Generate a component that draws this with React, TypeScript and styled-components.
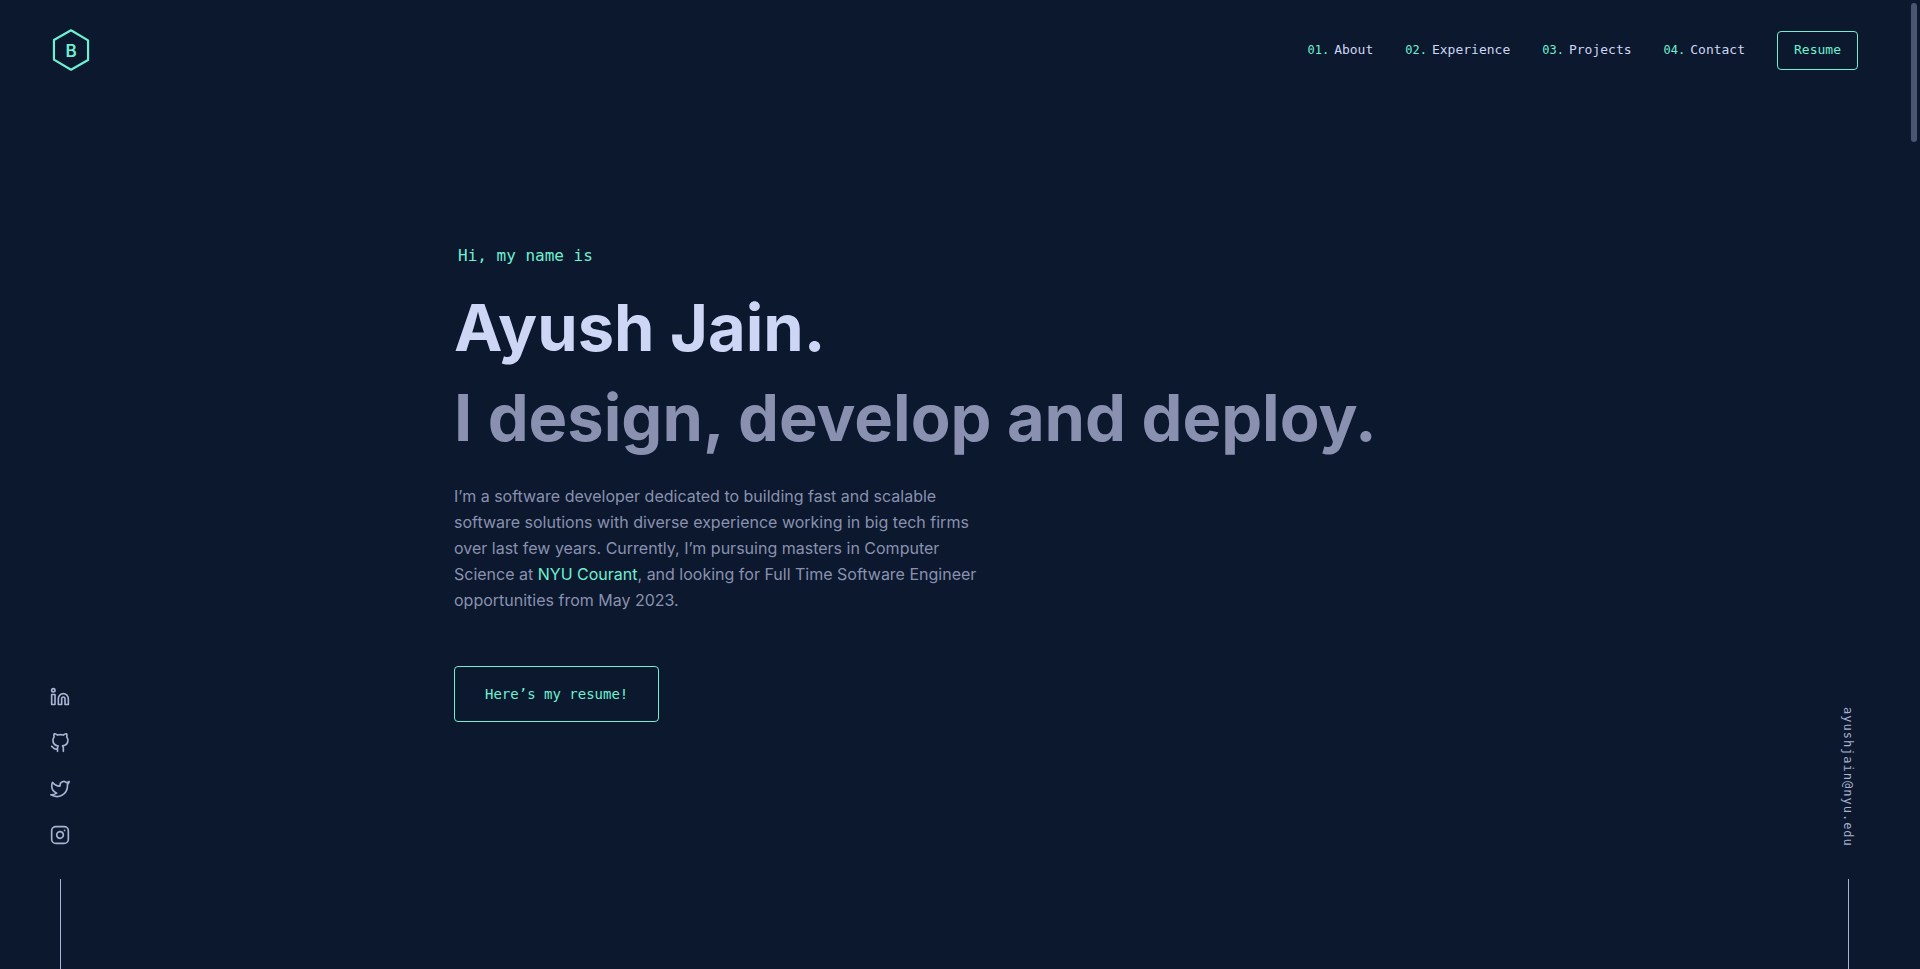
import React from "react";
import styled, { createGlobalStyle } from "styled-components";

const navy = "#0b182d";
const green = "#6ff0d2";
const slate = "#8a91b0";
const lightSlate = "#a8b2d1";
const lightest = "#ced6f6";
const sans = `Inter, "Liberation Sans", sans-serif`;
const mono = `"DejaVu Sans Mono", "Liberation Mono", monospace`;

const GlobalStyle = createGlobalStyle`
  *, *::before, *::after { box-sizing: border-box; }
  html { scrollbar-width: none; }
  body {
    margin: 0;
    background: ${navy};
    color: ${slate};
    font-family: ${sans};
    font-size: 16px;
    line-height: 26px;
  }
  a { color: inherit; text-decoration: none; }
`;

const Page = styled.div`
  display: flex;
  flex-direction: column;
  min-height: 100vh;
  padding-right: 12px;
`;

const Header = styled.header`
  display: flex;
  align-items: center;
  justify-content: space-between;
  height: 100px;
  padding: 0 50px;
`;

const LogoLink = styled.a`
  display: block;
  width: 42px;
  height: 42px;

  svg { display: block; }
  text {
    font-family: ${sans};
    font-size: 39px;
    font-weight: 600;
    text-anchor: middle;
  }
`;

const Nav = styled.nav`
  display: flex;
  align-items: center;
  gap: 32px;
  font-family: ${mono};
  font-size: 13px;
`;

const NavList = styled.ol`
  display: flex;
  gap: 32px;
  margin: 0;
  padding: 0;
  list-style: none;
`;

const NavLink = styled.a`
  display: flex;
  align-items: center;
  gap: 5px;
  color: ${lightest};
`;

const NavNumber = styled.span`
  color: ${green};
  font-size: 12px;
`;

const OutlineLink = styled.a<{ $large?: boolean }>`
  display: inline-flex;
  align-items: center;
  justify-content: center;
  height: ${(p) => (p.$large ? 56 : 39)}px;
  padding: 0 ${(p) => (p.$large ? 30 : 16)}px;
  border: 1px solid ${green};
  border-radius: 4px;
  color: ${green};
  font-family: ${mono};
  font-size: ${(p) => (p.$large ? 14 : 13)}px;
`;

const Body = styled.div`
  display: flex;
  flex: 1;
  justify-content: space-between;
  padding: 0 40px;
`;

const Side = styled.aside`
  display: flex;
  flex-direction: column;
  align-items: center;
  justify-content: flex-end;
  width: 40px;

  &::after {
    content: "";
    width: 1px;
    height: 90px;
    background: ${lightSlate};
  }
`;

const SocialList = styled.ul`
  display: flex;
  flex-direction: column;
  gap: 26px;
  margin: 0 0 34px;
  padding: 0;
  list-style: none;
`;

const SocialLink = styled.a`
  display: block;
  color: ${lightSlate};

  svg { display: block; }
`;

const EmailLink = styled.a`
  margin-bottom: 32px;
  color: ${lightSlate};
  font-family: ${mono};
  font-size: 12px;
  line-height: 18px;
  letter-spacing: 1px;
  writing-mode: vertical-rl;
`;

const Hero = styled.main`
  display: flex;
  flex: 0 1 1000px;
  flex-direction: column;
  align-items: flex-start;
  padding: 143px 0 60px;
`;

const Greeting = styled.p`
  margin: 0 0 14px 4px;
  color: ${green};
  font-family: ${mono};
  font-size: 16px;
`;

const Name = styled.h1`
  margin: 0;
  color: ${lightest};
  font-size: 65px;
  font-weight: 700;
  line-height: 90px;
`;

const Tagline = styled.h2`
  margin: 0;
  font-size: 65px;
  font-weight: 700;
  line-height: 90px;
`;

const Intro = styled.p`
  max-width: 540px;
  margin: 20px 0 53px;
`;

const GreenLink = styled.a`
  && { color: ${green}; }
`;

const ScrollThumb = styled.div`
  position: fixed;
  top: 3px;
  right: 3px;
  width: 6px;
  height: 139px;
  border-radius: 3px;
  background: #4a5572;
`;

const sections = ["About", "Experience", "Projects", "Contact"];

const socials = [
  {
    name: "LinkedIn",
    icon: (
      <>
        <path d="M16 8a6 6 0 0 1 6 6v7h-4v-7a2 2 0 0 0-2-2 2 2 0 0 0-2 2v7h-4v-7a6 6 0 0 1 6-6z" />
        <rect x="2" y="9" width="4" height="12" />
        <circle cx="4" cy="4" r="2" />
      </>
    ),
  },
  {
    name: "GitHub",
    icon: (
      <path d="M9 19c-5 1.5-5-2.5-7-3m14 6v-3.87a3.37 3.37 0 0 0-.94-2.61c3.14-.35 6.44-1.54 6.44-7A5.44 5.44 0 0 0 20 4.77 5.07 5.07 0 0 0 19.91 1S18.73.65 16 2.48a13.38 13.38 0 0 0-7 0C6.27.65 5.09 1 5.09 1A5.07 5.07 0 0 0 5 4.77a5.44 5.44 0 0 0-1.5 3.78c0 5.42 3.3 6.61 6.44 7A3.37 3.37 0 0 0 9 18.13V22" />
    ),
  },
  {
    name: "Twitter",
    icon: (
      <path d="M23 3a10.9 10.9 0 0 1-3.14 1.53 4.48 4.48 0 0 0-7.86 3v1A10.66 10.66 0 0 1 3 4s-4 9 5 13a11.64 11.64 0 0 1-7 2c9 5 20 0 20-11.5a4.5 4.5 0 0 0-.08-.83A7.72 7.72 0 0 0 23 3z" />
    ),
  },
  {
    name: "Instagram",
    icon: (
      <>
        <rect x="2" y="2" width="20" height="20" rx="5" ry="5" />
        <path d="M16 11.37A4 4 0 1 1 12.63 8 4 4 0 0 1 16 11.37z" />
        <line x1="17.5" y1="6.5" x2="17.51" y2="6.5" />
      </>
    ),
  },
];

export default function App() {
  return (
    <Page>
      <GlobalStyle />
      <Header>
        <LogoLink href="#home" aria-label="Home">
          <svg width="42" height="42" viewBox="2 2 96 96" fill="none">
            <path
              d="M50 5 11 27v45l39 23 39-22V28z"
              stroke={green}
              strokeWidth="5"
              strokeLinecap="round"
              strokeLinejoin="round"
            />
            <text x="50" y="66" fill={green}>B</text>
          </svg>
        </LogoLink>
        <Nav>
          <NavList>
            {sections.map((label, i) => (
              <li key={label}>
                <NavLink href={`#${label.toLowerCase()}`}>
                  <NavNumber>{`0${i + 1}.`}</NavNumber>
                  {label}
                </NavLink>
              </li>
            ))}
          </NavList>
          <OutlineLink href="#resume">Resume</OutlineLink>
        </Nav>
      </Header>
      <Body>
        <Side>
          <SocialList>
            {socials.map(({ name, icon }) => (
              <li key={name}>
                <SocialLink href={`#${name.toLowerCase()}`} aria-label={name}>
                  <svg
                    width="20"
                    height="20"
                    viewBox="0 0 24 24"
                    fill="none"
                    stroke="currentColor"
                    strokeWidth="2"
                    strokeLinecap="round"
                    strokeLinejoin="round"
                  >
                    {icon}
                  </svg>
                </SocialLink>
              </li>
            ))}
          </SocialList>
        </Side>
        <Hero>
          <Greeting>Hi, my name is</Greeting>
          <Name>Ayush Jain.</Name>
          <Tagline>I design, develop and deploy.</Tagline>
          <Intro>
            I’m a software developer dedicated to building fast and scalable software solutions
            with diverse experience working in big tech firms over last few years. Currently, I’m
            pursuing masters in Computer Science at <GreenLink href="#nyu">NYU Courant</GreenLink>,
            and looking for Full Time Software Engineer opportunities from May 2023.
          </Intro>
          <OutlineLink $large href="#resume">Here’s my resume!</OutlineLink>
        </Hero>
        <Side>
          <EmailLink href="mailto:ayushjain@nyu.edu">ayushjain@nyu.edu</EmailLink>
        </Side>
      </Body>
      <ScrollThumb />
    </Page>
  );
}
